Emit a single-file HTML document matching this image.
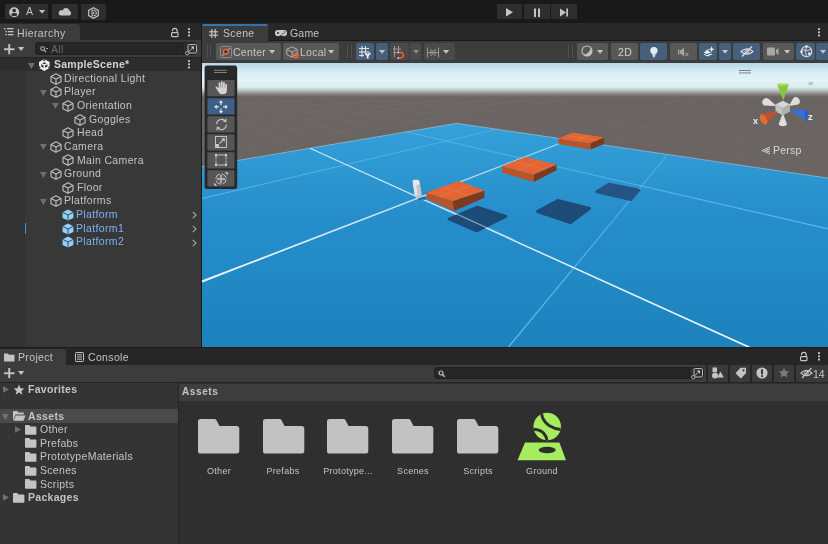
<!DOCTYPE html><html><head><meta charset="utf-8"><style>
html,body{margin:0;padding:0;}
body{width:828px;height:544px;overflow:hidden;position:relative;background:#191919;font-family:"Liberation Sans", sans-serif;}
.t{position:absolute;white-space:nowrap;line-height:1;-webkit-font-smoothing:antialiased;will-change:transform;}
svg{overflow:visible}
</style></head><body><div style="position:absolute;left:0px;top:0px;width:828px;height:23px;background:#191919;"></div><div style="position:absolute;left:4.5px;top:3.6px;width:43.7px;height:15.700000000000001px;background:#2e2e2e;border-radius:1.5px"></div><div style="position:absolute;left:52px;top:3.8px;width:25.799999999999997px;height:15.399999999999999px;background:#2e2e2e;border-radius:1.5px"></div><div style="position:absolute;left:81.3px;top:4.1px;width:24.900000000000006px;height:16.200000000000003px;background:#2e2e2e;border-radius:1.5px"></div><div style="position:absolute;left:496.7px;top:4px;width:25.599999999999966px;height:15px;background:#2e2e2e;border-radius:1px"></div><div style="position:absolute;left:524px;top:4px;width:26px;height:15px;background:#2e2e2e;border-radius:1px"></div><div style="position:absolute;left:551px;top:4px;width:26.399999999999977px;height:15px;background:#2e2e2e;border-radius:1px"></div><svg style="position:absolute;left:9px;top:6.5px;" width="11" height="11" viewBox="0 0 11 11"><circle cx="5.2" cy="5.2" r="5" fill="#c4c4c4"/><circle cx="5.2" cy="3.6" r="1.8" fill="#2b2b2b"/><ellipse cx="5.2" cy="7.6" rx="3" ry="1.5" fill="#2b2b2b"/></svg><div class="t" style="left:26px;top:6.10px;font-size:10.5px;color:#c4c4c4;font-weight:400;letter-spacing:0px;">A</div><svg style="position:absolute;left:38.8px;top:9.8px;" width="6.2" height="3.6" viewBox="0 0 6.2 3.6"><polygon points="0,0 6.2,0 3.1,3.6" fill="#c4c4c4"/></svg><svg style="position:absolute;left:58px;top:7px;" width="14" height="9" viewBox="0 0 14 9"><path d="M2.5 8.5 H11.5 A2.5 2.5 0 0 0 11.5 3.8 A3.6 3.6 0 0 0 4.6 3.4 A2.6 2.6 0 0 0 2.5 8.5 Z" fill="#c4c4c4"/></svg><svg style="position:absolute;left:88px;top:6.5px;" width="11.5" height="12" viewBox="0 0 11.5 12"><polygon points="5.5,0.7 10.3,3.4 10.3,8.6 5.5,11.3 0.7,8.6 0.7,3.4" fill="none" stroke="#c4c4c4" stroke-width="1.2"/><path d="M4 3.2 H5.6 A2.8 2.8 0 0 1 5.6 8.8 H4 Z" fill="none" stroke="#c4c4c4" stroke-width="1"/><polygon points="4.8,4.6 7,6 4.8,7.4" fill="#c4c4c4"/></svg><svg style="position:absolute;left:505px;top:8px;" width="9" height="9" viewBox="0 0 9 9"><polygon points="1,0 8,4.3 1,8.6" fill="#c4c4c4"/></svg><svg style="position:absolute;left:533px;top:7.5px;" width="9" height="9" viewBox="0 0 9 9"><rect x="1" y="0.5" width="2" height="8.5" fill="#c4c4c4"/><rect x="5" y="0.5" width="2" height="8.5" fill="#c4c4c4"/></svg><svg style="position:absolute;left:560px;top:7.5px;" width="10" height="10" viewBox="0 0 10 10"><polygon points="0,0.5 6,4.5 0,8.5" fill="#c4c4c4"/><rect x="6.3" y="0.5" width="1.7" height="8" fill="#c4c4c4"/></svg><div style="position:absolute;left:0px;top:23px;width:201px;height:17px;background:#282828;"></div><div style="position:absolute;left:0px;top:24px;width:80px;height:16px;background:#3c3c3c;border-radius:0 3px 0 0"></div><svg style="position:absolute;left:4px;top:28px;" width="10" height="8" viewBox="0 0 10 8"><g fill="#c4c4c4"><rect x="0" y="0" width="1.5" height="1.3"/><rect x="3" y="0" width="6.5" height="1.3"/><rect x="1.5" y="3" width="1.5" height="1.3"/><rect x="4" y="3" width="5.5" height="1.3"/><rect x="1.5" y="6" width="1.5" height="1.3"/><rect x="4" y="6" width="5.5" height="1.3"/></g></svg><div class="t" style="left:17.2px;top:27.60px;font-size:10.5px;color:#c4c4c4;font-weight:400;letter-spacing:0.4px;">Hierarchy</div><svg style="position:absolute;left:170.8px;top:27.8px;" width="8" height="9" viewBox="0 0 8 9"><path d="M1.5 3.3 V2.6 A2.3 2.3 0 0 1 6.1 2.6 V4.5" fill="none" stroke="#c4c4c4" stroke-width="1.2"/><rect x="0.6" y="4.6" width="6.4" height="4" rx="0.8" fill="none" stroke="#c4c4c4" stroke-width="1.2"/></svg><svg style="position:absolute;left:188.2px;top:28.2px;" width="3" height="10" viewBox="0 0 3 10"><rect x="0" y="0" width="2" height="2" rx="0.5" fill="#c4c4c4"/><rect x="0" y="3.25" width="2" height="2" rx="0.5" fill="#c4c4c4"/><rect x="0" y="6.5" width="2" height="2" rx="0.5" fill="#c4c4c4"/></svg><div style="position:absolute;left:0px;top:40px;width:201px;height:17px;background:#3c3c3c;"></div><svg style="position:absolute;left:3.7px;top:43.8px;" width="11" height="10.5" viewBox="0 0 11 10.5"><rect x="0" y="4.3" width="10.5" height="1.9" fill="#c4c4c4"/><rect x="4.3" y="0" width="1.9" height="10.2" fill="#c4c4c4"/></svg><svg style="position:absolute;left:17.9px;top:47px;" width="6.2" height="4" viewBox="0 0 6.2 4"><polygon points="0,0 6.2,0 3.1,4" fill="#c4c4c4"/></svg><div style="position:absolute;left:35px;top:42.3px;width:148.2px;height:13px;background:#262626;border-radius:4px 0 0 4px;box-sizing:border-box;border:1px solid #202020;border-right:none"></div><div style="position:absolute;left:183.2px;top:42.3px;width:14px;height:13px;background:#2e2e2e;border-radius:0 4px 4px 0;box-sizing:border-box;border:1px solid #202020"></div><svg style="position:absolute;left:39.5px;top:45.5px;" width="9" height="7" viewBox="0 0 9 7"><circle cx="2.6" cy="2.6" r="1.9" fill="none" stroke="#b0b0b0" stroke-width="1.1"/><line x1="3.9" y1="3.9" x2="6" y2="6" stroke="#b0b0b0" stroke-width="1.2"/><line x1="6" y1="2.6" x2="8" y2="2.6" stroke="#b0b0b0" stroke-width="1"/></svg><div class="t" style="left:51px;top:43.70px;font-size:10.5px;color:#6b6b6b;font-weight:400;letter-spacing:0.3px;">All</div><svg style="position:absolute;left:184.5px;top:43.8px;" width="12" height="11" viewBox="0 0 12 11"><rect x="3" y="0.5" width="8.5" height="8.5" rx="1.2" fill="none" stroke="#b8b8b8" stroke-width="1"/><path d="M2.5 9 L8.3 3.2" stroke="#b8b8b8" stroke-width="1"/><polygon points="9,2.5 9,5.8 5.7,2.5" fill="#d0d0d0"/><circle cx="2.3" cy="9.2" r="1.7" fill="#2a2a2a" stroke="#b8b8b8" stroke-width="0.9"/></svg><div style="position:absolute;left:0px;top:57px;width:201px;height:0.8px;background:#232323;"></div><div style="position:absolute;left:0px;top:57.5px;width:201px;height:290px;background:#383838;"></div><div style="position:absolute;left:0px;top:71px;width:25.3px;height:276px;background:#333333;"></div><div style="position:absolute;left:0px;top:57.5px;width:201px;height:13.5px;background:#2d2d2d;"></div><svg style="position:absolute;left:27.6px;top:62.6px;" width="7" height="6" viewBox="0 0 7 6"><polygon points="0,0 6.8,0 3.4,6" fill="#707070"/></svg><svg style="position:absolute;left:38.9px;top:59.4px;" width="11" height="12" viewBox="0 0 11 12"><path d="M5.3 0 L10.6 3 V8.9 L5.3 11.9 L0 8.9 V3 Z" fill="#e6f2f6"/><path d="M5.3 3.2 L2.2 5 V7.5 L5.3 9.3 L8.4 7.5 V5 Z" fill="#2d2d2d"/><path d="M5.3 6.2 V9.6 M5.3 6.2 L2 4.4 M5.3 6.2 L8.6 4.4" stroke="#e6f2f6" stroke-width="1.5"/><path d="M3.6 0.4 L5.3 2.6 L7 0.4 Z" fill="#2d2d2d"/><path d="M0 7 L1.8 8.4 L0 9.6 Z M10.6 7 L8.8 8.4 L10.6 9.6 Z" fill="#2d2d2d"/></svg><div class="t" style="left:53.7px;top:59.10px;font-size:10.5px;color:#d2d2d2;font-weight:700;letter-spacing:0.25px;">SampleScene*</div><svg style="position:absolute;left:188.2px;top:60.0px;" width="3" height="10" viewBox="0 0 3 10"><rect x="0" y="0" width="2" height="2" rx="0.5" fill="#c4c4c4"/><rect x="0" y="3.25" width="2" height="2" rx="0.5" fill="#c4c4c4"/><rect x="0" y="6.5" width="2" height="2" rx="0.5" fill="#c4c4c4"/></svg><svg style="position:absolute;left:50.0px;top:72.63px;" width="12" height="12" viewBox="0 0 12 12"><g fill="none" stroke="#bdbdbd" stroke-width="1.15" stroke-linejoin="round"><path d="M6 0.8 L11 3.4 V8.7 L6 11.3 L1 8.7 V3.4 Z"/><path d="M1 3.4 L6 6 L11 3.4 M6 6 V11.3"/></g></svg><div class="t" style="left:64.3px;top:72.73px;font-size:10.5px;color:#c4c4c4;font-weight:400;letter-spacing:0.35px;">Directional Light</div><svg style="position:absolute;left:40.0px;top:89.86px;" width="7" height="6" viewBox="0 0 7 6"><polygon points="0,0 6.8,0 3.4,6" fill="#707070"/></svg><svg style="position:absolute;left:50.0px;top:86.25999999999999px;" width="12" height="12" viewBox="0 0 12 12"><g fill="none" stroke="#bdbdbd" stroke-width="1.15" stroke-linejoin="round"><path d="M6 0.8 L11 3.4 V8.7 L6 11.3 L1 8.7 V3.4 Z"/><path d="M1 3.4 L6 6 L11 3.4 M6 6 V11.3"/></g></svg><div class="t" style="left:64.3px;top:86.36px;font-size:10.5px;color:#c4c4c4;font-weight:400;letter-spacing:0.35px;">Player</div><svg style="position:absolute;left:52.2px;top:103.49px;" width="7" height="6" viewBox="0 0 7 6"><polygon points="0,0 6.8,0 3.4,6" fill="#707070"/></svg><svg style="position:absolute;left:62.2px;top:99.88999999999999px;" width="12" height="12" viewBox="0 0 12 12"><g fill="none" stroke="#bdbdbd" stroke-width="1.15" stroke-linejoin="round"><path d="M6 0.8 L11 3.4 V8.7 L6 11.3 L1 8.7 V3.4 Z"/><path d="M1 3.4 L6 6 L11 3.4 M6 6 V11.3"/></g></svg><div class="t" style="left:76.5px;top:99.99px;font-size:10.5px;color:#c4c4c4;font-weight:400;letter-spacing:0.35px;">Orientation</div><svg style="position:absolute;left:74.4px;top:113.52px;" width="12" height="12" viewBox="0 0 12 12"><g fill="none" stroke="#bdbdbd" stroke-width="1.15" stroke-linejoin="round"><path d="M6 0.8 L11 3.4 V8.7 L6 11.3 L1 8.7 V3.4 Z"/><path d="M1 3.4 L6 6 L11 3.4 M6 6 V11.3"/></g></svg><div class="t" style="left:88.7px;top:113.62px;font-size:10.5px;color:#c4c4c4;font-weight:400;letter-spacing:0.35px;">Goggles</div><svg style="position:absolute;left:62.2px;top:127.15px;" width="12" height="12" viewBox="0 0 12 12"><g fill="none" stroke="#bdbdbd" stroke-width="1.15" stroke-linejoin="round"><path d="M6 0.8 L11 3.4 V8.7 L6 11.3 L1 8.7 V3.4 Z"/><path d="M1 3.4 L6 6 L11 3.4 M6 6 V11.3"/></g></svg><div class="t" style="left:76.5px;top:127.25px;font-size:10.5px;color:#c4c4c4;font-weight:400;letter-spacing:0.35px;">Head</div><svg style="position:absolute;left:40.0px;top:144.38px;" width="7" height="6" viewBox="0 0 7 6"><polygon points="0,0 6.8,0 3.4,6" fill="#707070"/></svg><svg style="position:absolute;left:50.0px;top:140.78px;" width="12" height="12" viewBox="0 0 12 12"><g fill="none" stroke="#bdbdbd" stroke-width="1.15" stroke-linejoin="round"><path d="M6 0.8 L11 3.4 V8.7 L6 11.3 L1 8.7 V3.4 Z"/><path d="M1 3.4 L6 6 L11 3.4 M6 6 V11.3"/></g></svg><div class="t" style="left:64.3px;top:140.88px;font-size:10.5px;color:#c4c4c4;font-weight:400;letter-spacing:0.35px;">Camera</div><svg style="position:absolute;left:62.2px;top:154.41px;" width="12" height="12" viewBox="0 0 12 12"><g fill="none" stroke="#bdbdbd" stroke-width="1.15" stroke-linejoin="round"><path d="M6 0.8 L11 3.4 V8.7 L6 11.3 L1 8.7 V3.4 Z"/><path d="M1 3.4 L6 6 L11 3.4 M6 6 V11.3"/></g></svg><div class="t" style="left:76.5px;top:154.51px;font-size:10.5px;color:#c4c4c4;font-weight:400;letter-spacing:0.35px;">Main Camera</div><svg style="position:absolute;left:40.0px;top:171.64px;" width="7" height="6" viewBox="0 0 7 6"><polygon points="0,0 6.8,0 3.4,6" fill="#707070"/></svg><svg style="position:absolute;left:50.0px;top:168.04px;" width="12" height="12" viewBox="0 0 12 12"><g fill="none" stroke="#bdbdbd" stroke-width="1.15" stroke-linejoin="round"><path d="M6 0.8 L11 3.4 V8.7 L6 11.3 L1 8.7 V3.4 Z"/><path d="M1 3.4 L6 6 L11 3.4 M6 6 V11.3"/></g></svg><div class="t" style="left:64.3px;top:168.14px;font-size:10.5px;color:#c4c4c4;font-weight:400;letter-spacing:0.35px;">Ground</div><svg style="position:absolute;left:62.2px;top:181.67px;" width="12" height="12" viewBox="0 0 12 12"><g fill="none" stroke="#bdbdbd" stroke-width="1.15" stroke-linejoin="round"><path d="M6 0.8 L11 3.4 V8.7 L6 11.3 L1 8.7 V3.4 Z"/><path d="M1 3.4 L6 6 L11 3.4 M6 6 V11.3"/></g></svg><div class="t" style="left:76.5px;top:181.77px;font-size:10.5px;color:#c4c4c4;font-weight:400;letter-spacing:0.35px;">Floor</div><svg style="position:absolute;left:40.0px;top:198.9px;" width="7" height="6" viewBox="0 0 7 6"><polygon points="0,0 6.8,0 3.4,6" fill="#707070"/></svg><svg style="position:absolute;left:50.0px;top:195.3px;" width="12" height="12" viewBox="0 0 12 12"><g fill="none" stroke="#bdbdbd" stroke-width="1.15" stroke-linejoin="round"><path d="M6 0.8 L11 3.4 V8.7 L6 11.3 L1 8.7 V3.4 Z"/><path d="M1 3.4 L6 6 L11 3.4 M6 6 V11.3"/></g></svg><div class="t" style="left:64.3px;top:195.40px;font-size:10.5px;color:#c4c4c4;font-weight:400;letter-spacing:0.35px;">Platforms</div><svg style="position:absolute;left:62.2px;top:208.93px;" width="12" height="12" viewBox="0 0 12 12"><path d="M6 0.6 L11.4 3.3 V8.9 L6 11.6 L0.6 8.9 V3.3 Z" fill="#8fd2ff"/><path d="M0.6 3.3 L6 6 L11.4 3.3 M6 6 V11.6" fill="none" stroke="#383838" stroke-width="0.9"/></svg><div class="t" style="left:76.0px;top:209.03px;font-size:10.5px;color:#7cb2ec;font-weight:400;letter-spacing:0.35px;">Platform</div><svg style="position:absolute;left:192px;top:211.33px;" width="5" height="8" viewBox="0 0 5 8"><path d="M0.8 0.8 L4 4 L0.8 7.2" fill="none" stroke="#a8a8a8" stroke-width="1.1"/></svg><svg style="position:absolute;left:62.2px;top:222.56px;" width="12" height="12" viewBox="0 0 12 12"><path d="M6 0.6 L11.4 3.3 V8.9 L6 11.6 L0.6 8.9 V3.3 Z" fill="#8fd2ff"/><path d="M0.6 3.3 L6 6 L11.4 3.3 M6 6 V11.6" fill="none" stroke="#383838" stroke-width="0.9"/></svg><div class="t" style="left:76.0px;top:222.66px;font-size:10.5px;color:#7cb2ec;font-weight:400;letter-spacing:0.35px;">Platform1</div><svg style="position:absolute;left:192px;top:224.96px;" width="5" height="8" viewBox="0 0 5 8"><path d="M0.8 0.8 L4 4 L0.8 7.2" fill="none" stroke="#a8a8a8" stroke-width="1.1"/></svg><svg style="position:absolute;left:62.2px;top:236.19px;" width="12" height="12" viewBox="0 0 12 12"><path d="M6 0.6 L11.4 3.3 V8.9 L6 11.6 L0.6 8.9 V3.3 Z" fill="#8fd2ff"/><path d="M0.6 3.3 L6 6 L11.4 3.3 M6 6 V11.6" fill="none" stroke="#383838" stroke-width="0.9"/></svg><div class="t" style="left:76.0px;top:236.29px;font-size:10.5px;color:#7cb2ec;font-weight:400;letter-spacing:0.35px;">Platform2</div><svg style="position:absolute;left:192px;top:238.59px;" width="5" height="8" viewBox="0 0 5 8"><path d="M0.8 0.8 L4 4 L0.8 7.2" fill="none" stroke="#a8a8a8" stroke-width="1.1"/></svg><div style="position:absolute;left:25.3px;top:223px;width:1px;height:10.6px;background:#3d8fd6;"></div><div style="position:absolute;left:200.5px;top:23px;width:1.8px;height:325px;background:#191919;"></div><div style="position:absolute;left:202px;top:23px;width:626px;height:17px;background:#282828;"></div><div style="position:absolute;left:202px;top:24px;width:66px;height:16.5px;background:#3c3c3c;border-radius:3px 3px 0 0"></div><div style="position:absolute;left:202px;top:24px;width:66px;height:1.6px;background:#3572ae;border-radius:3px 3px 0 0"></div><svg style="position:absolute;left:209px;top:28.5px;" width="9" height="9" viewBox="0 0 9 9"><g stroke="#c4c4c4" stroke-width="1.2"><line x1="2.8" y1="0" x2="2.8" y2="9"/><line x1="6.2" y1="0" x2="6.2" y2="9"/><line x1="0" y1="2.8" x2="9" y2="2.8"/><line x1="0" y1="6.2" x2="9" y2="6.2"/></g></svg><div class="t" style="left:222.8px;top:27.60px;font-size:10.5px;color:#c4c4c4;font-weight:400;letter-spacing:0.35px;">Scene</div><svg style="position:absolute;left:275.4px;top:29.8px;" width="12" height="6.5" viewBox="0 0 12 6.5"><path d="M3 0 H9 A3 3 0 0 1 9 6.2 Q7.5 6.2 6.8 5.2 H5.2 Q4.5 6.2 3 6.2 A3 3 0 0 1 3 0 Z" fill="#c8c8c8"/><circle cx="3" cy="3" r="1" fill="#282828"/><circle cx="9.8" cy="1.9" r="0.7" fill="#282828"/><circle cx="8.1" cy="3.8" r="0.7" fill="#282828"/></svg><div class="t" style="left:289.5px;top:27.60px;font-size:10.5px;color:#c4c4c4;font-weight:400;letter-spacing:0.2px;">Game</div><svg style="position:absolute;left:817.8px;top:27.7px;" width="3" height="10" viewBox="0 0 3 10"><rect x="0" y="0" width="2" height="2" rx="0.5" fill="#c4c4c4"/><rect x="0" y="3.25" width="2" height="2" rx="0.5" fill="#c4c4c4"/><rect x="0" y="6.5" width="2" height="2" rx="0.5" fill="#c4c4c4"/></svg><div style="position:absolute;left:202px;top:40.5px;width:626px;height:22px;background:#3c3c3c;"></div><div style="position:absolute;left:206.8px;top:45px;width:0.9px;height:13px;background:#505050;"></div><div style="position:absolute;left:210.20000000000002px;top:45px;width:0.9px;height:13px;background:#505050;"></div><div style="position:absolute;left:216px;top:43.2px;width:64.5px;height:16.799999999999997px;background:#585858;border-radius:2px"></div><svg style="position:absolute;left:220px;top:45.9px;" width="12" height="12" viewBox="0 0 12 12"><rect x="0.5" y="0.5" width="11" height="11" rx="1" fill="none" stroke="#8c8c8c" stroke-width="1"/><line x1="2" y1="10" x2="10" y2="2" stroke="#c4c4c4" stroke-width="1"/><circle cx="5.8" cy="5.8" r="2.4" fill="#3a3a3a" stroke="#f0663a" stroke-width="1.4"/></svg><div class="t" style="left:232.8px;top:46.70px;font-size:10.5px;color:#c4c4c4;font-weight:400;letter-spacing:0.25px;">Center</div><svg style="position:absolute;left:268.5px;top:50px;" width="6.2" height="3.8" viewBox="0 0 6.2 3.8"><polygon points="0,0 6.2,0 3.1,3.8" fill="#c4c4c4"/></svg><div style="position:absolute;left:282.7px;top:43.2px;width:56.60000000000002px;height:16.799999999999997px;background:#585858;border-radius:2px"></div><svg style="position:absolute;left:286px;top:45.5px;" width="14" height="13" viewBox="0 0 14 13"><g fill="none" stroke="#b0b0b0" stroke-width="1"><path d="M6 0.8 L11.2 3.4 V8.6 L6 11.2 L0.8 8.6 V3.4 Z"/><path d="M0.8 3.4 L6 6 L11.2 3.4 M6 6 V11.2"/></g><circle cx="9.8" cy="9.5" r="2.2" fill="none" stroke="#f0663a" stroke-width="1.5"/></svg><div class="t" style="left:299.8px;top:46.70px;font-size:10.5px;color:#c4c4c4;font-weight:400;letter-spacing:0.25px;">Local</div><svg style="position:absolute;left:327.5px;top:50px;" width="6.2" height="3.8" viewBox="0 0 6.2 3.8"><polygon points="0,0 6.2,0 3.1,3.8" fill="#c4c4c4"/></svg><div style="position:absolute;left:347.3px;top:45px;width:0.9px;height:13px;background:#505050;"></div><div style="position:absolute;left:350.7px;top:45px;width:0.9px;height:13px;background:#505050;"></div><div style="position:absolute;left:356px;top:43.2px;width:18.30000000000001px;height:16.799999999999997px;background:#46607c;border-radius:2px"></div><div style="position:absolute;left:376px;top:43.2px;width:11.800000000000011px;height:16.799999999999997px;background:#46607c;border-radius:2px"></div><svg style="position:absolute;left:359px;top:46.3px;" width="13" height="12.5" viewBox="0 0 13 12.5"><g stroke="#e0e0e0" stroke-width="1.1" fill="none"><line x1="3" y1="0" x2="3" y2="11"/><line x1="6.5" y1="0" x2="6.5" y2="6"/><line x1="0" y1="2.5" x2="10" y2="2.5"/><line x1="0" y1="6" x2="10" y2="6"/><line x1="0" y1="9.5" x2="5" y2="9.5"/></g><path d="M6.2 6.8 L8.7 9.6 L11.2 6.8 M8.7 9.6 V12.5" stroke="#eeeeee" stroke-width="1.8" fill="none"/></svg><svg style="position:absolute;left:378.8px;top:50px;" width="6.2" height="3.8" viewBox="0 0 6.2 3.8"><polygon points="0,0 6.2,0 3.1,3.8" fill="#c4c4c4"/></svg><div style="position:absolute;left:390px;top:43.2px;width:18.600000000000023px;height:16.799999999999997px;background:#4a4a4a;border-radius:2px"></div><div style="position:absolute;left:410px;top:43.2px;width:11.300000000000011px;height:16.799999999999997px;background:#4a4a4a;border-radius:2px"></div><svg style="position:absolute;left:393px;top:46.3px;" width="13" height="12.5" viewBox="0 0 13 12.5"><g stroke="#9a9a9a" stroke-width="1" fill="none"><line x1="1.5" y1="0" x2="1.5" y2="11"/><line x1="5.5" y1="0" x2="5.5" y2="6"/><line x1="0" y1="3" x2="8" y2="3"/><line x1="0" y1="6.5" x2="4" y2="6.5"/></g><path d="M4.5 6.5 H8.5 A3 3 0 0 1 8.5 12 H4.5" stroke="#e8602f" stroke-width="1.6" fill="none"/><path d="M4.5 6.5 H6 M4.5 12 H6" stroke="#dddddd" stroke-width="1.6"/></svg><svg style="position:absolute;left:412.6px;top:50px;" width="6.2" height="3.8" viewBox="0 0 6.2 3.8"><polygon points="0,0 6.2,0 3.1,3.8" fill="#8a8a8a"/></svg><div style="position:absolute;left:423.8px;top:43.2px;width:31.0px;height:16.799999999999997px;background:#4a4a4a;border-radius:2px"></div><svg style="position:absolute;left:427px;top:46.5px;" width="12" height="11" viewBox="0 0 12 11"><g stroke="#9a9a9a" stroke-width="1" fill="none"><line x1="0" y1="5.5" x2="12" y2="5.5"/><line x1="0.5" y1="0.5" x2="0.5" y2="10.5"/><line x1="11.5" y1="0.5" x2="11.5" y2="10.5"/><line x1="4" y1="2" x2="4" y2="9"/><line x1="8" y1="2" x2="8" y2="9"/><line x1="6" y1="3" x2="6" y2="8"/></g></svg><svg style="position:absolute;left:442.5px;top:50px;" width="6.2" height="3.8" viewBox="0 0 6.2 3.8"><polygon points="0,0 6.2,0 3.1,3.8" fill="#c4c4c4"/></svg><div style="position:absolute;left:568.3px;top:45px;width:0.9px;height:13px;background:#505050;"></div><div style="position:absolute;left:571.6999999999999px;top:45px;width:0.9px;height:13px;background:#505050;"></div><div style="position:absolute;left:577.2px;top:43.2px;width:30.899999999999977px;height:16.799999999999997px;background:#585858;border-radius:2px"></div><svg style="position:absolute;left:580.5px;top:45.3px;" width="12" height="12" viewBox="0 0 12 12"><circle cx="6" cy="6" r="5" fill="none" stroke="#c4c4c4" stroke-width="1.1"/><path d="M9.6 2.4 A5.1 5.1 0 0 1 2.4 9.6 A7.5 7.5 0 0 0 9.6 2.4 Z" fill="#c4c4c4"/></svg><svg style="position:absolute;left:597px;top:50px;" width="6.2" height="3.8" viewBox="0 0 6.2 3.8"><polygon points="0,0 6.2,0 3.1,3.8" fill="#c4c4c4"/></svg><div style="position:absolute;left:611px;top:43.2px;width:27px;height:16.799999999999997px;background:#585858;border-radius:2px"></div><div class="t" style="left:617.5px;top:46.70px;font-size:10.5px;color:#d0d0d0;font-weight:400;letter-spacing:0.3px;">2D</div><div style="position:absolute;left:640px;top:43.2px;width:27px;height:16.799999999999997px;background:#46607c;border-radius:2px"></div><svg style="position:absolute;left:649px;top:45.5px;" width="10" height="12" viewBox="0 0 10 12"><circle cx="4.9" cy="4.6" r="3.6" fill="#e8f4ff"/><circle cx="4.9" cy="4.6" r="2" fill="none" stroke="#c0d4e6" stroke-width="0.6"/><rect x="3.4" y="8.2" width="3" height="1.6" fill="#e8f4ff"/><polygon points="3.4,10.2 6.4,10.2 4.9,11.8" fill="#e8f4ff"/></svg><div style="position:absolute;left:670px;top:43.2px;width:26.700000000000045px;height:16.799999999999997px;background:#585858;border-radius:2px"></div><svg style="position:absolute;left:677.5px;top:46.5px;" width="12" height="10" viewBox="0 0 12 10"><rect x="0" y="2.5" width="1" height="5" fill="#a8a8a8"/><rect x="1.6" y="3" width="1.6" height="4" fill="#a8a8a8"/><polygon points="3.2,3 6,0.5 6,9.5 3.2,7" fill="#a8a8a8"/><path d="M7 5.5 L10.5 9.3 M10.5 5.5 L7 9.3" stroke="#a8a8a8" stroke-width="1"/></svg><div style="position:absolute;left:699px;top:43.2px;width:18.399999999999977px;height:16.799999999999997px;background:#46607c;border-radius:2px"></div><div style="position:absolute;left:719.3px;top:43.2px;width:11.900000000000091px;height:16.799999999999997px;background:#46607c;border-radius:2px"></div><svg style="position:absolute;left:702.5px;top:46px;" width="12" height="11" viewBox="0 0 12 11"><path d="M0.5 6.5 L4.5 4.6 L8 6.2 L4 8.1 Z" fill="#e8f2f8"/><path d="M0.5 8.6 L1.6 8.1 L4 9.3 L8 7.4 L9.6 8.1 L4.6 10.6 Z" fill="#e8f2f8"/><path d="M2 5 L5.5 3.3 L6.5 3.8 L3 5.5 Z" fill="#e8f2f8"/><path d="M8.6 0.3 L9.4 2.5 L11.6 3.3 L9.4 4.1 L8.6 6.3 L7.8 4.1 L5.6 3.3 L7.8 2.5 Z" fill="#e8f2f8"/></svg><svg style="position:absolute;left:722.2px;top:50px;" width="6.2" height="3.8" viewBox="0 0 6.2 3.8"><polygon points="0,0 6.2,0 3.1,3.8" fill="#c4c4c4"/></svg><div style="position:absolute;left:733px;top:43.2px;width:27.200000000000045px;height:16.799999999999997px;background:#46607c;border-radius:2px"></div><svg style="position:absolute;left:740px;top:46px;" width="14" height="11" viewBox="0 0 14 11"><path d="M1 5.5 Q7 0 13 5.5 Q7 11 1 5.5 Z" fill="none" stroke="#e0e0e0" stroke-width="1.1"/><circle cx="7" cy="5.5" r="2" fill="none" stroke="#e0e0e0" stroke-width="1"/><line x1="2" y1="10.5" x2="12" y2="0.5" stroke="#e0e0e0" stroke-width="1.2"/></svg><div style="position:absolute;left:762.8px;top:43.2px;width:31.40000000000009px;height:16.799999999999997px;background:#585858;border-radius:2px"></div><svg style="position:absolute;left:767px;top:47.3px;" width="13" height="9" viewBox="0 0 13 9"><rect x="0" y="0.5" width="8" height="8" rx="1" fill="#a8a8a8"/><path d="M9 3 L11.5 1 V8 L9 6 Z" fill="#a8a8a8"/></svg><svg style="position:absolute;left:783.5px;top:50px;" width="6.2" height="3.8" viewBox="0 0 6.2 3.8"><polygon points="0,0 6.2,0 3.1,3.8" fill="#c4c4c4"/></svg><div style="position:absolute;left:796px;top:43.2px;width:19px;height:16.799999999999997px;background:#46607c;border-radius:2px"></div><div style="position:absolute;left:816.4px;top:43.2px;width:13.600000000000023px;height:16.799999999999997px;background:#46607c;border-radius:2px"></div><svg style="position:absolute;left:799.5px;top:45.3px;" width="13" height="13" viewBox="0 0 13 13"><circle cx="6.5" cy="6.5" r="5.2" fill="none" stroke="#e0e0e0" stroke-width="1.1"/><path d="M2 4.5 Q6.5 7 11 4.5 M6.5 1.3 Q4.5 6.5 6.5 11.7" fill="none" stroke="#e0e0e0" stroke-width="0.9"/><circle cx="6.5" cy="1.6" r="1.4" fill="#e8e8e8"/><circle cx="1.6" cy="6.8" r="1.4" fill="#e8e8e8"/><circle cx="9.3" cy="8.6" r="1.4" fill="#e8e8e8"/></svg><svg style="position:absolute;left:819.5px;top:50px;" width="6.2" height="3.8" viewBox="0 0 6.2 3.8"><polygon points="0,0 6.2,0 3.1,3.8" fill="#c4c4c4"/></svg><svg style="position:absolute;left:202px;top:62.5px" width="626" height="285" viewBox="202 62.5 626 285"><defs><linearGradient id="sky" gradientUnits="userSpaceOnUse" x1="0" y1="62.5" x2="0" y2="97"><stop offset="0.000" stop-color="#b8d6e6"/><stop offset="0.275" stop-color="#d8eef5"/><stop offset="0.507" stop-color="#e2f4f8"/><stop offset="0.696" stop-color="#dcecee"/><stop offset="0.783" stop-color="#bcc6c8"/><stop offset="0.870" stop-color="#969696"/><stop offset="0.957" stop-color="#716c6a"/><stop offset="1.000" stop-color="#6a6462"/></linearGradient><linearGradient id="pl" gradientUnits="userSpaceOnUse" x1="0" y1="122" x2="0" y2="347"><stop offset="0" stop-color="#36a0da"/><stop offset="0.4" stop-color="#268fcb"/><stop offset="1" stop-color="#1c82be"/></linearGradient><clipPath id="gclip"><polygon points="202,99 828,99 828,177.6 456.8,122.8 202,166"/></clipPath></defs><rect x="202" y="62.5" width="626" height="285" fill="#6a6462"/><rect x="202" y="62.5" width="626" height="34.5" fill="url(#sky)"/><g clip-path="url(#gclip)" stroke="#8a8a8a" stroke-width="0.6" opacity="0.25"><line x1="202" y1="100" x2="828" y2="68.9"/><line x1="202" y1="106" x2="828" y2="68.0"/><line x1="202" y1="113" x2="828" y2="66.9"/><line x1="202" y1="121" x2="828" y2="65.7"/><line x1="202" y1="130" x2="828" y2="64.3"/><line x1="202" y1="140" x2="828" y2="62.8"/><line x1="202" y1="152" x2="828" y2="60.9"/><line x1="150" y1="75" x2="420" y2="360"/><line x1="150" y1="75" x2="555" y2="360"/><line x1="150" y1="75" x2="720" y2="360"/><line x1="150" y1="75" x2="900" y2="360"/><line x1="150" y1="75" x2="1110" y2="360"/><line x1="150" y1="75" x2="1380" y2="360"/><line x1="150" y1="75" x2="1740" y2="360"/><line x1="150" y1="75" x2="2220" y2="360"/><line x1="150" y1="75" x2="2850" y2="360"/><line x1="745" y1="73" x2="10" y2="364"/><line x1="745" y1="73" x2="190" y2="364"/><line x1="745" y1="73" x2="430" y2="364"/><line x1="745" y1="73" x2="730" y2="364"/><line x1="745" y1="73" x2="1090" y2="364"/></g><polygon points="202,166 456.8,122.8 828,177.6 828,348 202,348" fill="url(#pl)"/><polyline points="202,166 456.8,122.8 828,177.6" fill="none" stroke="#b8dcf0" stroke-width="0.9" opacity="0.55"/><linearGradient id="gE" gradientUnits="userSpaceOnUse" x1="202" y1="198" x2="497" y2="128.6"><stop offset="0" stop-color="#6cc0ee" stop-opacity="0.75"/><stop offset="1" stop-color="#6cc0ee" stop-opacity="0.5"/></linearGradient><polygon points="202.14,198.58 497.09,128.99 496.91,128.21 201.86,197.42" fill="url(#gE)"/><linearGradient id="gD" gradientUnits="userSpaceOnUse" x1="828" y1="228.3" x2="406.7" y2="131.5"><stop offset="0" stop-color="#6cc0ee" stop-opacity="0.8"/><stop offset="1" stop-color="#6cc0ee" stop-opacity="0.5"/></linearGradient><polygon points="828.13,227.72 406.79,131.11 406.61,131.89 827.87,228.88" fill="url(#gD)"/><linearGradient id="gC" gradientUnits="userSpaceOnUse" x1="507.3" y1="348" x2="667" y2="154.7"><stop offset="0" stop-color="#6cc0ee" stop-opacity="0.85"/><stop offset="1" stop-color="#6cc0ee" stop-opacity="0.6"/></linearGradient><polygon points="507.84,348.45 667.35,154.99 666.65,154.41 506.76,347.55" fill="url(#gC)"/><linearGradient id="gA" gradientUnits="userSpaceOnUse" x1="752" y1="348" x2="310" y2="147.7"><stop offset="0" stop-color="#f2faff" stop-opacity="1.0"/><stop offset="1" stop-color="#f2faff" stop-opacity="0.8"/></linearGradient><polygon points="752.39,347.13 310.21,147.24 309.79,148.16 751.61,348.87" fill="url(#gA)"/><linearGradient id="gB" gradientUnits="userSpaceOnUse" x1="202" y1="281" x2="570" y2="139"><stop offset="0" stop-color="#f2faff" stop-opacity="1.0"/><stop offset="1" stop-color="#f2faff" stop-opacity="0.6"/></linearGradient><polygon points="202.34,281.89 570.16,139.42 569.84,138.58 201.66,280.11" fill="url(#gB)"/><polygon points="448.90,218.47 477.38,206.60 505.90,215.89 476.75,230.40" fill="#1d4c78" stroke="#1d4c78" stroke-width="2.8" stroke-linejoin="round"/><polygon points="537.40,211.06 557.71,199.91 589.81,207.93 570.33,222.27" fill="#1d4c78" stroke="#1d4c78" stroke-width="2.8" stroke-linejoin="round"/><polygon points="596.60,191.27 609.12,183.54 638.90,189.59 630.85,199.20" fill="#245484" stroke="#245484" stroke-width="2.8" stroke-linejoin="round"/><line x1="440" y1="206" x2="515" y2="240" stroke="#c8def0" stroke-width="1.3" opacity="0.6"/><polygon points="426.3,191.9 452.8,200.6 454.2,210.5 426.9,198.6" fill="#b9532a"/><polygon points="452.8,200.6 484.4,189.9 484.4,197.2 454.2,210.5" fill="#7c3a1f"/><polygon points="426.3,191.9 458.8,180.6 484.4,189.9 452.8,200.6" fill="#e26532"/><g stroke="#ee8a5c" stroke-width="0.6" opacity="0.7"><line x1="442.55" y1="186.25" x2="468.6" y2="195.25"/><line x1="471.6" y1="185.25" x2="439.55" y2="196.25"/></g><polygon points="501.9,165.6 533.8,173.9 533.8,181.4 502.4,172.3" fill="#b9532a"/><polygon points="533.8,173.9 556.5,164 556.5,169.8 533.8,181.4" fill="#7c3a1f"/><polygon points="501.9,165.6 525.6,156.5 556.5,164 533.8,173.9" fill="#e26532"/><g stroke="#ee8a5c" stroke-width="0.6" opacity="0.7"><line x1="513.75" y1="161.05" x2="545.15" y2="168.95"/><line x1="541.05" y1="160.25" x2="517.8499999999999" y2="169.75"/></g><polygon points="558.4,138 590.6,142.6 590.6,149 558.4,143.5" fill="#b9532a"/><polygon points="590.6,142.6 604,137.1 604,143.5 590.6,149" fill="#7c3a1f"/><polygon points="558.4,138 573.1,131.9 604,137.1 590.6,142.6" fill="#e26532"/><g stroke="#ee8a5c" stroke-width="0.6" opacity="0.7"><line x1="565.75" y1="134.95" x2="597.3" y2="139.85"/><line x1="588.55" y1="134.5" x2="574.5" y2="140.3"/></g><ellipse cx="422" cy="198" rx="4" ry="1.3" fill="#1d4c78" opacity="0.8"/><g transform="rotate(-9 417.3 188.4)"><rect x="413.8" y="178.9" width="7" height="19" rx="3.5" fill="#c2c6ca"/><rect x="413.8" y="178.9" width="3" height="16" rx="1.5" fill="#dfe4e8"/><ellipse cx="417.3" cy="182" rx="3.3" ry="2.6" fill="#e4e8ec"/></g><rect x="204.6" y="65" width="32.6" height="123.6" rx="2.5" fill="#282828"/><rect x="214" y="69.3" width="13" height="0.9" fill="#8a8a8a"/><rect x="214" y="71.6" width="13" height="0.9" fill="#8a8a8a"/><rect x="207.4" y="79.6" width="27.1" height="16.2" rx="0.8" fill="#565656"/><rect x="207.4" y="97.8" width="27.1" height="16.2" rx="0.8" fill="#3f5f86"/><rect x="207.4" y="115.8" width="27.1" height="16.2" rx="0.8" fill="#565656"/><rect x="207.4" y="133.8" width="27.1" height="16.2" rx="0.8" fill="#565656"/><rect x="207.4" y="151.8" width="27.1" height="16.2" rx="0.8" fill="#565656"/><rect x="207.4" y="169.8" width="27.1" height="16.2" rx="0.8" fill="#565656"/></svg><svg style="position:absolute;left:214.5px;top:81px;" width="13" height="13.5" viewBox="0 0 13 13.5"><g fill="#d2d2d2"><rect x="3.6" y="1.6" width="1.8" height="7" rx="0.9"/><rect x="5.8" y="0.2" width="1.8" height="8" rx="0.9"/><rect x="8" y="0.9" width="1.8" height="7.5" rx="0.9"/><rect x="10.2" y="2.8" width="1.7" height="6" rx="0.85"/><path d="M3.6 6.5 H11.9 V9.5 Q11.9 13.2 8 13.2 H6.5 Q4.8 13.2 3.8 11.6 L0.6 6.6 Q0.3 5.4 1.5 5.6 Q2.3 5.8 3.6 7.8 Z"/></g></svg><svg style="position:absolute;left:213.5px;top:99.5px;" width="14" height="14" viewBox="0 0 14 14"><g stroke="#e6eef6" stroke-width="1.1" fill="none"><line x1="7" y1="2" x2="7" y2="5"/><line x1="7" y1="8.5" x2="7" y2="11.5"/><line x1="2" y1="6.8" x2="5" y2="6.8"/><line x1="9" y1="6.8" x2="12" y2="6.8"/></g><g fill="#e6eef6"><polygon points="7,0.2 4.9,2.8 9.1,2.8"/><polygon points="7,13.5 4.9,10.9 9.1,10.9"/><polygon points="0.2,6.8 2.8,4.7 2.8,8.9"/><polygon points="13.8,6.8 11.2,4.7 11.2,8.9"/></g></svg><svg style="position:absolute;left:214.5px;top:117.5px;" width="13" height="13" viewBox="0 0 13 13"><path d="M9.8 2.6 A5 5 0 0 0 1.6 6.2 M3.2 10.4 A5 5 0 0 0 11.4 6.8" fill="none" stroke="#c4c4c4" stroke-width="1.1"/><polygon points="11.6,0.6 11.2,4.6 7.6,3.2" fill="#c4c4c4"/><polygon points="1.4,12.4 1.8,8.4 5.4,9.8" fill="#c4c4c4"/></svg><svg style="position:absolute;left:215px;top:135.8px;" width="12" height="12" viewBox="0 0 12 12"><rect x="0.5" y="0.5" width="11" height="11" fill="none" stroke="#c4c4c4" stroke-width="1"/><rect x="0.5" y="8" width="3.5" height="3.5" fill="#c4c4c4"/><path d="M4.5 7.5 L9 3" stroke="#c4c4c4" stroke-width="1.1"/><polygon points="9.8,2.2 9.8,6 6,2.2" fill="#c4c4c4"/></svg><svg style="position:absolute;left:215px;top:154px;" width="12" height="12" viewBox="0 0 12 12"><g stroke="#c4c4c4" stroke-width="1"><line x1="1" y1="3.2" x2="1" y2="8.8" stroke-dasharray="2.2 1.2"/><line x1="11" y1="3.2" x2="11" y2="8.8" stroke-dasharray="2.2 1.2"/><line x1="3.2" y1="1" x2="8.8" y2="1"/><line x1="3.2" y1="11" x2="8.8" y2="11"/></g><g fill="#d0d0d0"><rect x="0" y="0" width="2.4" height="2.4"/><rect x="9.6" y="0" width="2.4" height="2.4"/><rect x="0" y="9.6" width="2.4" height="2.4"/><rect x="9.6" y="9.6" width="2.4" height="2.4"/></g></svg><svg style="position:absolute;left:214px;top:171.5px;" width="14" height="14" viewBox="0 0 14 14"><circle cx="7" cy="7" r="5.2" fill="none" stroke="#c4c4c4" stroke-width="1" stroke-dasharray="6.2 2"/><g fill="#d0d0d0"><polygon points="7,2.6 5.4,4.6 8.6,4.6"/><polygon points="7,11.4 5.4,9.4 8.6,9.4"/><polygon points="2.6,7 4.6,5.4 4.6,8.6"/><polygon points="11.4,7 9.4,5.4 9.4,8.6"/><rect x="6.4" y="4.6" width="1.2" height="4.8"/><rect x="4.6" y="6.4" width="4.8" height="1.2"/><polygon points="13.8,0.2 13.8,3.2 10.8,0.2"/><polygon points="0.2,13.8 0.2,10.8 3.2,13.8"/></g></svg><svg style="position:absolute;left:740px;top:75px" width="80" height="60" viewBox="740 75 80 60"><polygon points="777.3,84.5 788.7,84.5 783.3,100.6" fill="#86c83c"/><ellipse cx="783" cy="84.8" rx="5.7" ry="1.2" fill="#a2dc58"/><path d="M776.5 106 L768.5 98.8 A3.8 3.8 0 0 0 764.3 105.6 Z" fill="#dedede"/><path d="M789 106 L793.5 97.8 A3.8 3.8 0 0 1 798 104.5 Z" fill="#dedede"/><path d="M782.8 113 L778.6 124.2 A4.3 2.6 0 0 0 787 124.2 Z" fill="#dedede"/><polygon points="775.3,104.5 782.8,100.8 790.2,104.5 782.8,108.3" fill="#d6d6d6"/><polygon points="775.3,104.5 782.8,108.3 782.8,115.2 775.6,111.5" fill="#c4c4c4"/><polygon points="782.8,108.3 790.2,104.5 790,111.5 782.8,115.2" fill="#b0b0b0"/><polygon points="777.8,111.3 760.5,114.5 766.5,124.6" fill="#c0502a"/><ellipse cx="763.6" cy="119.5" rx="3.2" ry="5.6" transform="rotate(-28 763.6 119.5)" fill="#e26a36"/><polygon points="789.7,110.3 807.1,109.8 807.1,121.2" fill="#3a6ed8"/><ellipse cx="806.2" cy="115.5" rx="1.6" ry="5.7" fill="#2f5fc4"/><rect x="808.6" y="82" width="4.4" height="3" fill="#9a9a9a" opacity="0.5"/></svg><div class="t" style="left:753.3px;top:117.16px;font-size:9px;color:#eeeeee;font-weight:700;letter-spacing:0px;">x</div><div class="t" style="left:808px;top:112.20px;font-size:9.5px;color:#eeeeee;font-weight:700;letter-spacing:0px;">z</div><svg style="position:absolute;left:761px;top:145.5px;" width="10" height="9" viewBox="0 0 10 9"><path d="M9 1 L1 4.5 L9 8 M9 3 L4 4.5 L9 6" fill="none" stroke="#d8d8d8" stroke-width="0.9"/></svg><div class="t" style="left:772.5px;top:144.50px;font-size:10.5px;color:#d8d8d8;font-weight:400;letter-spacing:0.2px;">Persp</div><svg style="position:absolute;left:739px;top:70px;" width="12" height="4" viewBox="0 0 12 4"><rect x="0" y="0" width="12" height="0.9" fill="#777"/><rect x="0" y="2.5" width="12" height="0.9" fill="#777"/></svg><div style="position:absolute;left:0px;top:346.8px;width:828px;height:17.8px;background:#262626;"></div><div style="position:absolute;left:0px;top:346.8px;width:828px;height:1.4px;background:#1c1c1c;"></div><div style="position:absolute;left:0px;top:348.8px;width:66px;height:16px;background:#3c3c3c;border-radius:0 3px 0 0"></div><svg style="position:absolute;left:4px;top:352.5px;" width="11" height="8.5" viewBox="0 0 11 8.5"><path d="M0 0.5 H4 L5 1.8 H10.5 V8.5 H0 Z" fill="#c4c4c4"/></svg><div class="t" style="left:17.8px;top:352.20px;font-size:10.5px;color:#c4c4c4;font-weight:400;letter-spacing:0.35px;">Project</div><svg style="position:absolute;left:74.5px;top:351.5px;" width="9" height="10" viewBox="0 0 9 10"><rect x="0.5" y="0.5" width="8" height="9" rx="0.8" fill="none" stroke="#c4c4c4" stroke-width="1"/><g fill="#c4c4c4"><rect x="2" y="2.3" width="5" height="1"/><rect x="2" y="4.5" width="5" height="1"/><rect x="2" y="6.7" width="5" height="1"/></g></svg><div class="t" style="left:88.3px;top:352.20px;font-size:10.5px;color:#c4c4c4;font-weight:400;letter-spacing:0.35px;">Console</div><svg style="position:absolute;left:800.2px;top:352px;" width="8" height="9" viewBox="0 0 8 9"><path d="M1.5 3.3 V2.6 A2.3 2.3 0 0 1 6.1 2.6 V4.5" fill="none" stroke="#c4c4c4" stroke-width="1.2"/><rect x="0.6" y="4.6" width="6.4" height="4" rx="0.8" fill="none" stroke="#c4c4c4" stroke-width="1.2"/></svg><svg style="position:absolute;left:817.7px;top:352.4px;" width="3" height="10" viewBox="0 0 3 10"><rect x="0" y="0" width="2" height="2" rx="0.5" fill="#c4c4c4"/><rect x="0" y="3.25" width="2" height="2" rx="0.5" fill="#c4c4c4"/><rect x="0" y="6.5" width="2" height="2" rx="0.5" fill="#c4c4c4"/></svg><div style="position:absolute;left:0px;top:364.6px;width:828px;height:17.7px;background:#3c3c3c;"></div><svg style="position:absolute;left:3.7px;top:367.8px;" width="11" height="10.5" viewBox="0 0 11 10.5"><rect x="0" y="4.3" width="10.5" height="1.9" fill="#c4c4c4"/><rect x="4.3" y="0" width="1.9" height="10.2" fill="#c4c4c4"/></svg><svg style="position:absolute;left:17.9px;top:371px;" width="6.2" height="4" viewBox="0 0 6.2 4"><polygon points="0,0 6.2,0 3.1,4" fill="#c4c4c4"/></svg><div style="position:absolute;left:434.4px;top:367.1px;width:254.6px;height:12.4px;background:#262626;border-radius:4px 0 0 4px;box-sizing:border-box;border:1px solid #202020;border-right:none"></div><div style="position:absolute;left:689px;top:367.1px;width:15px;height:12.4px;background:#2e2e2e;border-radius:0 4px 4px 0;box-sizing:border-box;border:1px solid #202020"></div><svg style="position:absolute;left:438px;top:369.5px;" width="8" height="8" viewBox="0 0 8 8"><circle cx="3" cy="3" r="2" fill="none" stroke="#c4c4c4" stroke-width="1.2"/><line x1="4.4" y1="4.4" x2="6.8" y2="6.8" stroke="#c4c4c4" stroke-width="1.4"/></svg><svg style="position:absolute;left:691.3px;top:367.8px;" width="12" height="11" viewBox="0 0 12 11"><rect x="3" y="0.5" width="8.5" height="8.5" rx="1.2" fill="none" stroke="#b8b8b8" stroke-width="1"/><path d="M2.5 9 L8.3 3.2" stroke="#b8b8b8" stroke-width="1"/><polygon points="9,2.5 9,5.8 5.7,2.5" fill="#d0d0d0"/><circle cx="2.3" cy="9.2" r="1.7" fill="#2a2a2a" stroke="#b8b8b8" stroke-width="0.9"/></svg><div style="position:absolute;left:705.5px;top:364.3px;width:123px;height:17.6px;background:#262626;"></div><div style="position:absolute;left:707.8px;top:365.1px;width:20.100000000000023px;height:16.6px;background:#3a3a3a;"></div><div style="position:absolute;left:729.6px;top:365.1px;width:20.100000000000023px;height:16.6px;background:#3a3a3a;"></div><div style="position:absolute;left:751.5px;top:365.1px;width:20.5px;height:16.6px;background:#3a3a3a;"></div><div style="position:absolute;left:773.7px;top:365.1px;width:20.699999999999932px;height:16.6px;background:#3a3a3a;"></div><div style="position:absolute;left:796.2px;top:365.1px;width:32.799999999999955px;height:16.6px;background:#3a3a3a;"></div><svg style="position:absolute;left:711.5px;top:367px;" width="12" height="12" viewBox="0 0 12 12"><rect x="0.5" y="0.5" width="4.5" height="4.5" fill="#c4c4c4"/><circle cx="3" cy="8.5" r="3" fill="#c4c4c4"/><polygon points="8.5,4.5 11.8,10.5 5.2,10.5" fill="#c4c4c4"/></svg><svg style="position:absolute;left:734.5px;top:367px;" width="12" height="12" viewBox="0 0 12 12"><path d="M5.5 0.8 H11 V6.3 L5.8 11.5 L0.5 6.2 Z" fill="#c4c4c4"/><circle cx="8.5" cy="3.3" r="1.1" fill="#383838"/></svg><svg style="position:absolute;left:756px;top:366.5px;" width="12" height="12" viewBox="0 0 12 12"><circle cx="6" cy="6" r="5.6" fill="#c4c4c4"/><rect x="5" y="2.4" width="2" height="5" fill="#383838"/><rect x="5" y="8.3" width="2" height="1.6" fill="#383838"/></svg><svg style="position:absolute;left:778px;top:367px;" width="12" height="12" viewBox="0 0 12 12"><polygon points="6,0.6 7.5,4.2 11.4,4.4 8.4,6.9 9.4,10.8 6,8.6 2.6,10.8 3.6,6.9 0.6,4.4 4.5,4.2" fill="#7c7c7c"/></svg><svg style="position:absolute;left:799.5px;top:367px;" width="14" height="12" viewBox="0 0 14 12"><path d="M1 6 Q6.5 0.5 12 6 Q6.5 11.5 1 6 Z" fill="none" stroke="#c4c4c4" stroke-width="1.1"/><circle cx="6.5" cy="6" r="1.8" fill="none" stroke="#c4c4c4" stroke-width="1"/><line x1="2" y1="11" x2="11.5" y2="1" stroke="#c4c4c4" stroke-width="1.2"/></svg><div class="t" style="left:813px;top:368.80px;font-size:10.5px;color:#c4c4c4;font-weight:400;letter-spacing:0px;">14</div><div style="position:absolute;left:0px;top:381.7px;width:828px;height:1.2px;background:#242424;"></div><div style="position:absolute;left:0px;top:382.9px;width:177.5px;height:162px;background:#343434;"></div><div style="position:absolute;left:177.5px;top:382.9px;width:1.5px;height:162px;background:#242424;"></div><div style="position:absolute;left:179px;top:382.9px;width:649px;height:162px;background:#2f2f2f;"></div><div style="position:absolute;left:179px;top:383.5px;width:649px;height:17.3px;background:#3e3e3e;"></div><div class="t" style="left:182.3px;top:387.15px;font-size:10px;color:#c4c4c4;font-weight:700;letter-spacing:0.6px;">Assets</div><div style="position:absolute;left:0px;top:409.2px;width:177.5px;height:13.8px;background:#4a4a4a;"></div><svg style="position:absolute;left:2.5px;top:385.5px;" width="6" height="7" viewBox="0 0 6 7"><polygon points="0,0 6,3.4 0,6.8" fill="#707070"/></svg><svg style="position:absolute;left:13px;top:384px;" width="12" height="12" viewBox="0 0 12 12"><polygon points="6,0.6 7.5,4.2 11.4,4.4 8.4,6.9 9.4,10.8 6,8.6 2.6,10.8 3.6,6.9 0.6,4.4 4.5,4.2" fill="#c4c4c4"/></svg><div class="t" style="left:28px;top:384.30px;font-size:10.5px;color:#c4c4c4;font-weight:700;letter-spacing:0.3px;">Favorites</div><svg style="position:absolute;left:2.3px;top:414.2px;" width="7" height="6" viewBox="0 0 7 6"><polygon points="0,0 6.8,0 3.4,6" fill="#707070"/></svg><svg style="position:absolute;left:13px;top:411.2px;" width="13" height="10" viewBox="0 0 13 10"><path d="M0 0.8 Q0 0 0.8 0 H4.2 L5.4 1.6 H10 Q10.8 1.6 10.8 2.4 V3.6 H2.6 L0 9.8 Z" fill="#c4c4c4"/><path d="M2.9 4.4 H12.6 L10.4 9.8 H0.6 Z" fill="#c4c4c4"/></svg><div class="t" style="left:28px;top:410.60px;font-size:10.5px;color:#c4c4c4;font-weight:700;letter-spacing:0.35px;">Assets</div><svg style="position:absolute;left:15px;top:426.40000000000003px;" width="6" height="7" viewBox="0 0 6 7"><polygon points="0,0 6,3.4 0,6.8" fill="#707070"/></svg><svg style="position:absolute;left:25.2px;top:424.8px;" width="12" height="10" viewBox="0 0 12 10"><path d="M0 0.8 Q0 0 0.8 0 H4.2 L5.4 1.6 H10.6 Q11.4 1.6 11.4 2.4 V9 Q11.4 9.8 10.6 9.8 H0.8 Q0 9.8 0 9 Z" fill="#c4c4c4"/></svg><div class="t" style="left:39.5px;top:424.20px;font-size:10.5px;color:#c4c4c4;font-weight:400;letter-spacing:0.3px;">Other</div><svg style="position:absolute;left:25.2px;top:438.4px;" width="12" height="10" viewBox="0 0 12 10"><path d="M0 0.8 Q0 0 0.8 0 H4.2 L5.4 1.6 H10.6 Q11.4 1.6 11.4 2.4 V9 Q11.4 9.8 10.6 9.8 H0.8 Q0 9.8 0 9 Z" fill="#c4c4c4"/></svg><div class="t" style="left:39.5px;top:437.80px;font-size:10.5px;color:#c4c4c4;font-weight:400;letter-spacing:0.3px;">Prefabs</div><svg style="position:absolute;left:25.2px;top:452.0px;" width="12" height="10" viewBox="0 0 12 10"><path d="M0 0.8 Q0 0 0.8 0 H4.2 L5.4 1.6 H10.6 Q11.4 1.6 11.4 2.4 V9 Q11.4 9.8 10.6 9.8 H0.8 Q0 9.8 0 9 Z" fill="#c4c4c4"/></svg><div class="t" style="left:39.5px;top:451.40px;font-size:10.5px;color:#c4c4c4;font-weight:400;letter-spacing:0.3px;">PrototypeMaterials</div><svg style="position:absolute;left:25.2px;top:465.59999999999997px;" width="12" height="10" viewBox="0 0 12 10"><path d="M0 0.8 Q0 0 0.8 0 H4.2 L5.4 1.6 H10.6 Q11.4 1.6 11.4 2.4 V9 Q11.4 9.8 10.6 9.8 H0.8 Q0 9.8 0 9 Z" fill="#c4c4c4"/></svg><div class="t" style="left:39.5px;top:465.00px;font-size:10.5px;color:#c4c4c4;font-weight:400;letter-spacing:0.3px;">Scenes</div><svg style="position:absolute;left:25.2px;top:479.2px;" width="12" height="10" viewBox="0 0 12 10"><path d="M0 0.8 Q0 0 0.8 0 H4.2 L5.4 1.6 H10.6 Q11.4 1.6 11.4 2.4 V9 Q11.4 9.8 10.6 9.8 H0.8 Q0 9.8 0 9 Z" fill="#c4c4c4"/></svg><div class="t" style="left:39.5px;top:478.60px;font-size:10.5px;color:#c4c4c4;font-weight:400;letter-spacing:0.3px;">Scripts</div><svg style="position:absolute;left:2.5px;top:494.4px;" width="6" height="7" viewBox="0 0 6 7"><polygon points="0,0 6,3.4 0,6.8" fill="#707070"/></svg><svg style="position:absolute;left:13px;top:492.79999999999995px;" width="12" height="10" viewBox="0 0 12 10"><path d="M0 0.8 Q0 0 0.8 0 H4.2 L5.4 1.6 H10.6 Q11.4 1.6 11.4 2.4 V9 Q11.4 9.8 10.6 9.8 H0.8 Q0 9.8 0 9 Z" fill="#c4c4c4"/></svg><div class="t" style="left:28px;top:492.20px;font-size:10.5px;color:#c4c4c4;font-weight:700;letter-spacing:0.3px;">Packages</div><svg style="position:absolute;left:197.9px;top:419.1px;" width="42" height="35" viewBox="0 0 42 35"><path d="M0 2.5 Q0 0 2.5 0 H16.5 Q17.8 0 18.5 1.2 L21.5 7 H39 Q41.3 7 41.3 9.5 V32 Q41.3 34.6 39 34.6 H2.5 Q0 34.6 0 32 Z" fill="#c2c2c2"/></svg><div class="t" style="left:178.5px;width:80px;text-align:center;top:467.36px;font-size:9px;color:#c4c4c4;letter-spacing:0.3px">Other</div><svg style="position:absolute;left:262.65px;top:419.1px;" width="42" height="35" viewBox="0 0 42 35"><path d="M0 2.5 Q0 0 2.5 0 H16.5 Q17.8 0 18.5 1.2 L21.5 7 H39 Q41.3 7 41.3 9.5 V32 Q41.3 34.6 39 34.6 H2.5 Q0 34.6 0 32 Z" fill="#c2c2c2"/></svg><div class="t" style="left:243.25px;width:80px;text-align:center;top:467.36px;font-size:9px;color:#c4c4c4;letter-spacing:0.3px">Prefabs</div><svg style="position:absolute;left:327.4px;top:419.1px;" width="42" height="35" viewBox="0 0 42 35"><path d="M0 2.5 Q0 0 2.5 0 H16.5 Q17.8 0 18.5 1.2 L21.5 7 H39 Q41.3 7 41.3 9.5 V32 Q41.3 34.6 39 34.6 H2.5 Q0 34.6 0 32 Z" fill="#c2c2c2"/></svg><div class="t" style="left:308.0px;width:80px;text-align:center;top:467.36px;font-size:9px;color:#c4c4c4;letter-spacing:0.3px">Prototype...</div><svg style="position:absolute;left:392.15px;top:419.1px;" width="42" height="35" viewBox="0 0 42 35"><path d="M0 2.5 Q0 0 2.5 0 H16.5 Q17.8 0 18.5 1.2 L21.5 7 H39 Q41.3 7 41.3 9.5 V32 Q41.3 34.6 39 34.6 H2.5 Q0 34.6 0 32 Z" fill="#c2c2c2"/></svg><div class="t" style="left:372.75px;width:80px;text-align:center;top:467.36px;font-size:9px;color:#c4c4c4;letter-spacing:0.3px">Scenes</div><svg style="position:absolute;left:456.9px;top:419.1px;" width="42" height="35" viewBox="0 0 42 35"><path d="M0 2.5 Q0 0 2.5 0 H16.5 Q17.8 0 18.5 1.2 L21.5 7 H39 Q41.3 7 41.3 9.5 V32 Q41.3 34.6 39 34.6 H2.5 Q0 34.6 0 32 Z" fill="#c2c2c2"/></svg><div class="t" style="left:437.5px;width:80px;text-align:center;top:467.36px;font-size:9px;color:#c4c4c4;letter-spacing:0.3px">Scripts</div><svg style="position:absolute;left:516px;top:411px;" width="52" height="50" viewBox="0 0 52 50"><circle cx="31.2" cy="15.5" r="13.7" fill="#a6ec5f"/><path d="M25.5 2.5 Q26.5 10 33 14.5 Q38.5 18 44.5 18.5" fill="none" stroke="#2e2e2e" stroke-width="2.9"/><path d="M17.8 18.2 Q24 18.5 27.5 22 Q30.5 25.5 31 29" fill="none" stroke="#2e2e2e" stroke-width="2.9"/><polygon points="9,31.6 43.4,31.6 50,49.3 1.5,49.3" fill="#a6ec5f"/><ellipse cx="31.2" cy="39" rx="8.5" ry="3.2" fill="#2e2e2e"/></svg><div class="t" style="left:501.5px;width:80px;text-align:center;top:467.36px;font-size:9px;color:#c4c4c4;letter-spacing:0.3px">Ground</div></body></html>
